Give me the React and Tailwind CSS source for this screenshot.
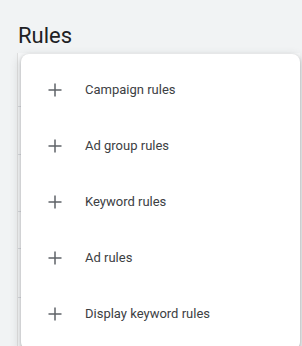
import React from 'react';

const rules = [
    'Campaign rules',
    'Ad group rules',
    'Keyword rules',
    'Ad rules',
    'Display keyword rules',
];

function Plus() {
    return (
        <svg width="14" height="14" viewBox="0 0 14 14" className="shrink-0">
            <path d="M7 0.5v13M0.5 7h13" stroke="#5f6368" strokeWidth="1.5" fill="none" />
        </svg>
    );
}

export default function App() {
    return (
        <div className="w-[302px] h-[346px] overflow-hidden bg-[#f1f3f4] relative" style={{ fontFamily: 'Roboto, "Liberation Sans", sans-serif' }}>
            <h1 className="pl-[18px] pt-[22px] text-[22px] leading-[28px] text-[#202124] font-normal">Rules</h1>

            {/* table behind the menu */}
            <div className="ml-[17px] mt-[3px] w-[283px] h-[300px] bg-[#f8f9fa] border-l border-[#e0e0e0]">
                <div className="h-[54px] border-b border-[#dadce0]"></div>
                <div className="h-[48px] border-b border-[#dadce0]"></div>
                <div className="h-[57px] border-b border-[#dadce0]"></div>
                <div className="h-[37px] border-b border-[#dadce0]"></div>
                <div className="h-[49px] border-b border-[#dadce0]"></div>
            </div>

            {/* menu */}
            <div className="absolute left-[21px] top-[54px] w-[279px] bg-white rounded-lg shadow-[0_1px_3px_rgba(60,64,67,0.3),0_4px_8px_3px_rgba(60,64,67,0.15)] pt-[8px] pb-[8px]">
                {rules.map(r => (
                    <div key={r} className="h-[56px] flex items-center pl-[27px]">
                        <Plus />
                        <span className="ml-[23px] text-[13px] text-[#3c4043]">{r}</span>
                    </div>
                ))}
            </div>
        </div>
    );
}
